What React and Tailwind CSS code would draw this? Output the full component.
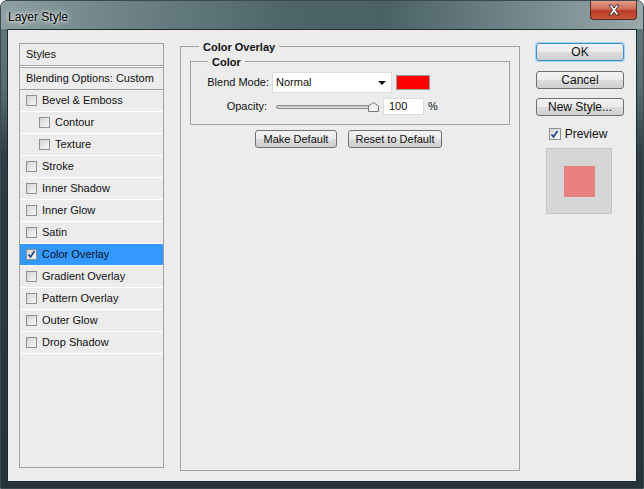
import React from "react";

const font = { fontFamily: '"Liberation Sans", Arial, sans-serif' };

function Check({ checked = false }) {
  return (
    <span className="w-[11px] h-[11px] shrink-0 border border-[#8e8f8f] bg-[linear-gradient(135deg,#d4d4d4,#f7f7f7)] flex items-center justify-center">
      {checked && (
        <svg width="9" height="9" viewBox="0 0 9 9">
          <path d="M1.5 4.5 L3.5 7 L7.5 1" fill="none" stroke="#1f3f8f" strokeWidth="1.6" />
        </svg>
      )}
    </span>
  );
}

function StyleRow({ label, indent = false, checked = false, selected = false }) {
  return (
    <div
      className={`h-[22px] flex items-center gap-[5px] border-b border-white ${
        indent ? "pl-[19px]" : "pl-[6px]"
      } ${selected ? "bg-[#3399ff]" : ""}`}
    >
      <Check checked={checked} />
      <span className="text-[11px] text-[#111]">{label}</span>
    </div>
  );
}

function Button({ children, className = "" }) {
  return (
    <button
      className={`h-[18px] rounded-[3px] border border-[#707070] bg-[linear-gradient(180deg,#f2f2f2_0%,#ebebeb_50%,#dddddd_51%,#cfcfcf_100%)] text-[11px] text-[#111] leading-none flex items-center justify-center ${className}`}
    >
      {children}
    </button>
  );
}

export default function App() {
  const rows = [
    { label: "Bevel & Emboss" },
    { label: "Contour", indent: true },
    { label: "Texture", indent: true },
    { label: "Stroke" },
    { label: "Inner Shadow" },
    { label: "Inner Glow" },
    { label: "Satin" },
    { label: "Color Overlay", checked: true, selected: true },
    { label: "Gradient Overlay" },
    { label: "Pattern Overlay" },
    { label: "Outer Glow" },
    { label: "Drop Shadow" },
  ];

  return (
    <div
      style={font}
      className="w-[644px] h-[489px] rounded-t-[7px] border border-[#3a4a50] bg-[linear-gradient(180deg,#7f9498_0%,#60767a_6%,#566c70_18%,#2e3d45_32%,#26333b_100%)] flex flex-col"
    >
      {/* Title bar */}
      <div className="h-[28px] shrink-0 flex items-start justify-between rounded-t-[6px] bg-[linear-gradient(90deg,#8fa0a2_0%,#72888b_15%,#4d6569_45%,#4a6266_60%,#7a8e91_85%,#9aa8aa_100%)]">
        <span className="ml-[7px] mt-[7px] text-[12px] text-black [text-shadow:0_0_6px_#fff,0_0_3px_#fff]">
          Layer Style
        </span>
        <div className="mr-[6px] w-[47px] h-[19px] rounded-b-[4px] border border-t-0 border-[#5a2a22] bg-[linear-gradient(180deg,#e39a8a_0%,#d06a55_45%,#b93a24_55%,#c9563c_100%)] flex items-center justify-center">
          <svg width="14" height="12" viewBox="0 0 14 12">
            <path
              d="M2 1 L5 1 L7 4 L9 1 L12 1 L8.5 6 L12 11 L9 11 L7 8 L5 11 L2 11 L5.5 6 Z"
              fill="#fff"
              stroke="#3a2a2a"
              strokeWidth="0.9"
            />
          </svg>
        </div>
      </div>

      {/* Client area */}
      <div className="mx-[6px] mb-[6px] flex-1 border border-[#1d2a30] bg-[#ececec] flex pl-[11px] pt-[13px] pr-[12px]">
        {/* Styles list */}
        <div className="w-[146px] h-[425px] border border-[#a0a0a0] flex flex-col">
          <div className="h-[22px] flex items-center pl-[6px] border-b border-[#a0a0a0] text-[11px] text-[#111]">
            Styles
          </div>
          <div className="h-[1px] bg-white" />
          <div className="h-[23px] flex items-center pl-[6px] border-t border-b border-[#a0a0a0] text-[11px] text-[#111]">
            Blending Options: Custom
          </div>
          {rows.map((r) => (
            <StyleRow key={r.label} {...r} />
          ))}
        </div>

        {/* Color Overlay fieldset */}
        <div className="ml-[16px] mt-[3px] w-[340px] h-[425px] relative border border-[#a0a0a0] px-[9px] pt-[14px]">
          <span className="absolute -top-[8px] left-[18px] px-[4px] bg-[#ececec] text-[11px] font-bold text-[#111]">
            Color Overlay
          </span>

          <div className="relative w-[320px] h-[64px] border border-[#a0a0a0]">
            <span className="absolute -top-[8px] left-[17px] px-[4px] bg-[#ececec] text-[11px] font-bold text-[#111]">
              Color
            </span>
            <div className="flex items-center mt-[10px]">
              <span className="w-[78px] text-right text-[11px] text-[#111]">Blend Mode:</span>
              <div className="ml-[3px] w-[120px] h-[21px] bg-white border border-[#dcdcdc] flex items-center justify-between pl-[3px] pr-[5px]">
                <span className="text-[11px] text-[#111]">Normal</span>
                <svg width="8" height="4" viewBox="0 0 8 4">
                  <path d="M0 0 H8 L4 4 Z" fill="#111" />
                </svg>
              </div>
              <div className="ml-[4px] w-[34px] h-[15px] bg-[#ff0000] border border-[#9a9a9a]" />
            </div>
            <div className="flex items-center mt-[5px]">
              <span className="w-[76px] text-right text-[11px] text-[#111]">Opacity:</span>
              <div className="ml-[9px] w-[104px] h-[12px] relative flex items-center">
                <div className="w-[100px] h-[4px] rounded-full border border-[#8c8c8c] bg-[linear-gradient(180deg,#bdbdbd,#e6e6e6)]" />
                <svg className="absolute left-[92px] top-[1px]" width="11" height="10" viewBox="0 0 11 10">
                  <path d="M0.5 9.5 V4 L5.5 0.5 L10.5 4 V9.5 Z" fill="#f0f0f0" stroke="#777" />
                </svg>
              </div>
              <div className="ml-[3px] w-[41px] h-[17px] bg-white border border-[#dcdcdc] flex items-center pl-[5px] text-[11px] text-[#111]">
                100
              </div>
              <span className="ml-[4px] text-[11px] text-[#111]">%</span>
            </div>
          </div>

          <div className="flex mt-[5px] ml-[65px] gap-[11px]">
            <Button className="w-[82px]">Make Default</Button>
            <Button className="w-[94px]">Reset to Default</Button>
          </div>
        </div>

        {/* Right column */}
        <div className="ml-[16px] w-[88px] flex flex-col items-center">
          <Button className="w-[88px] !h-[18px] !border-[#3c8ccc] shadow-[0_0_0_1px_#9fd6f5] text-[12px]">
            OK
          </Button>
          <Button className="w-[88px] mt-[10px] text-[12px]">Cancel</Button>
          <Button className="w-[88px] mt-[9px] text-[12px]">New Style...</Button>
          <div className="mt-[9px] flex items-center gap-[4px] pr-[4px]">
            <span className="w-[12px] h-[12px] border border-[#8e8f8f] bg-[linear-gradient(135deg,#d4d4d4,#f7f7f7)] flex items-center justify-center">
              <svg width="9" height="9" viewBox="0 0 9 9">
                <path d="M1.5 4.5 L3.5 7 L7.5 1" fill="none" stroke="#1f3f8f" strokeWidth="1.6" />
              </svg>
            </span>
            <span className="text-[12px] text-[#111]">Preview</span>
          </div>
          <div className="mt-[5px] mr-[2px] w-[66px] h-[66px] bg-[#d5d7d7] border border-[#c4c4c4] flex items-center justify-center">
            <div className="w-[31px] h-[31px] bg-[#e88080]" />
          </div>
        </div>
      </div>
    </div>
  );
}
